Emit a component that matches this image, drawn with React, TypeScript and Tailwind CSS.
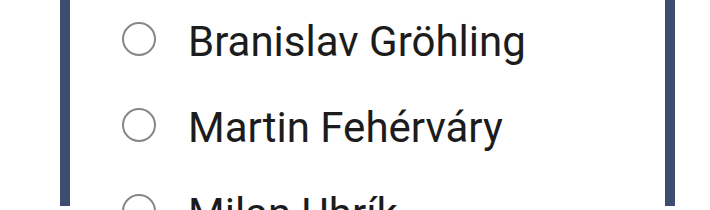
import React from "react";

const names = ["Branislav Gröhling", "Martin Fehérváry", "Milan Uhrík"];

export default function App() {
  return (
    <div className="w-[710px] h-[210px] overflow-hidden bg-white">
      <div className="ml-[60px] w-[615px] h-[210px] border-x-[10px] border-[#3d4c6f] bg-white">
        <div className="-mt-[4px] flex flex-col">
          {names.map((n) => (
            <div key={n} className="flex h-[86px] items-center pl-[52px]">
              <div className="h-[34px] w-[34px] shrink-0 rounded-full border-[2.5px] border-[#878787]" />
              <span
                className="ml-[32px] pt-[6px] text-[42px] font-normal leading-none text-[#1c1c1c]"
                style={{ fontFamily: "Roboto, sans-serif" }}
              >
                {n}
              </span>
            </div>
          ))}
        </div>
      </div>
    </div>
  );
}
